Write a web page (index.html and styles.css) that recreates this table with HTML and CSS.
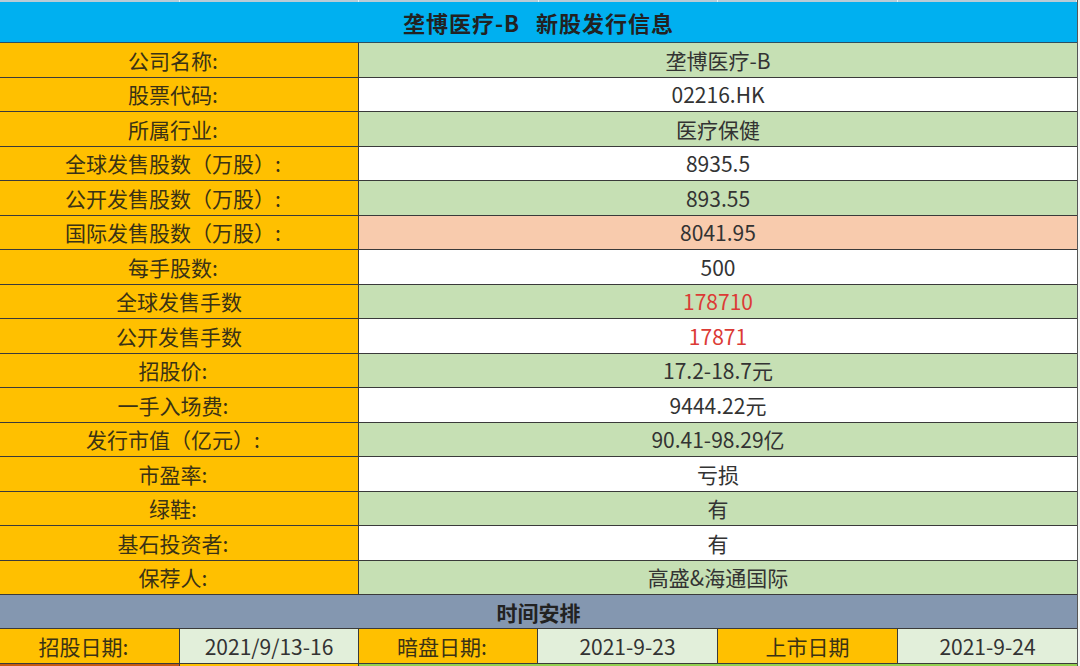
FILE: index.html
```html
<!DOCTYPE html>
<html lang="zh-CN">
<head>
<meta charset="utf-8">
<title>垄博医疗-B 新股发行信息</title>
<link rel="stylesheet" href="styles.css">
</head>
<body>
<div class="sheet">
  <div class="strip">
    <span></span><span></span><span></span><span></span><span></span><span></span>
  </div>
  <div class="title">垄博医疗-B<span class="gap"></span>新股发行信息</div>
  <div class="row"><div class="lab c">公司名称:</div><div class="val green">垄博医疗-B</div></div>
  <div class="row"><div class="lab c">股票代码:</div><div class="val white">02216.HK</div></div>
  <div class="row"><div class="lab c">所属行业:</div><div class="val green">医疗保健</div></div>
  <div class="row"><div class="lab c">全球发售股数（万股）:</div><div class="val white">8935.5</div></div>
  <div class="row"><div class="lab c">公开发售股数（万股）:</div><div class="val green">893.55</div></div>
  <div class="row"><div class="lab c">国际发售股数（万股）:</div><div class="val salmon">8041.95</div></div>
  <div class="row"><div class="lab c">每手股数:</div><div class="val white">500</div></div>
  <div class="row"><div class="lab">全球发售手数</div><div class="val green red">178710</div></div>
  <div class="row"><div class="lab">公开发售手数</div><div class="val white red">17871</div></div>
  <div class="row"><div class="lab c">招股价:</div><div class="val green">17.2-18.7元</div></div>
  <div class="row"><div class="lab c">一手入场费:</div><div class="val white">9444.22元</div></div>
  <div class="row"><div class="lab c">发行市值（亿元）:</div><div class="val green">90.41-98.29亿</div></div>
  <div class="row"><div class="lab c">市盈率:</div><div class="val white">亏损</div></div>
  <div class="row"><div class="lab c">绿鞋:</div><div class="val green">有</div></div>
  <div class="row"><div class="lab c">基石投资者:</div><div class="val white">有</div></div>
  <div class="row"><div class="lab c">保荐人:</div><div class="val green">高盛&amp;海通国际</div></div>
  <div class="section">时间安排</div>
  <div class="dates">
    <div class="dlab c">招股日期:</div><div class="dval">2021/9/13-16</div>
    <div class="dlab c">暗盘日期:</div><div class="dval">2021-9-23</div>
    <div class="dlab">上市日期</div><div class="dval">2021-9-24</div>
  </div>
  <div class="next">
    <div class="brown"></div><div class="yellow"></div><div class="lgreen"></div>
  </div>
</div>
</body>
</html>
```
FILE: styles.css
```css
html, body {
  margin: 0;
  padding: 0;
  background: #f4f6f4;
}
body {
  width: 1080px;
  height: 666px;
  overflow: hidden;
  font-family: "Noto Sans CJK SC", "Noto Sans", sans-serif;
  color: #333;
}
.sheet {
  width: 1077px;
  border-right: 1px solid #555;
}
.strip {
  height: 2px;
  background: #b9cbd6;
  display: grid;
  grid-template-columns: repeat(6, 1fr);
}
.strip span {
  border-right: 1px solid #e8eef2;
}
.title {
  height: 41px;
  box-sizing: border-box;
  border-bottom: 1px solid #2f4f5f;
  background: #00b0f0;
  font-weight: bold;
  font-size: 22px;
  letter-spacing: 1px;
  display: flex;
  align-items: center;
  justify-content: center;
  color: #222;
}
.gap {
  display: inline-block;
  width: 16px;
}
.row {
  display: grid;
  grid-template-columns: 359px 1fr;
  height: 34.5px;
  box-sizing: border-box;
  border-bottom: 1px solid #3a3a3a;
  font-size: 21px;
}
.lab, .val, .dlab, .dval {
  display: flex;
  align-items: center;
  justify-content: center;
  white-space: nowrap;
}
.lab {
  background: #ffc000;
  border-right: 1px solid #3a3a3a;
  color: #3a3215;
}
.c {
  padding-right: 12px;
}
.green { background: #c6e0b4; }
.white { background: #ffffff; }
.salmon { background: #f8cbad; }
.red { color: #dc3b36; }
.section {
  height: 34px;
  box-sizing: border-box;
  border-bottom: 1px solid #3a3a3a;
  background: #8497b0;
  font-weight: bold;
  font-size: 21px;
  display: flex;
  align-items: center;
  justify-content: center;
  color: #222;
}
.dates {
  display: grid;
  grid-template-columns: 180px 179px 179px 180px 180px 1fr;
  height: 35px;
  box-sizing: border-box;
  border-bottom: 1px solid #3a3a3a;
  font-size: 21px;
}
.dlab {
  background: #ffc000;
  border-right: 1px solid #3a3a3a;
  color: #3a3215;
}
.dval {
  background: #e2efda;
  border-right: 1px solid #3a3a3a;
}
.dates .dval:last-child { border-right: none; }
.next {
  display: grid;
  grid-template-columns: 180px 179px 1fr;
  height: 10px;
}
.brown { background: #c55a11; border-right: 1px solid #3a3a3a; }
.yellow { background: #ffc000; border-right: 1px solid #3a3a3a; }
.lgreen { background: #92d050; }
```
